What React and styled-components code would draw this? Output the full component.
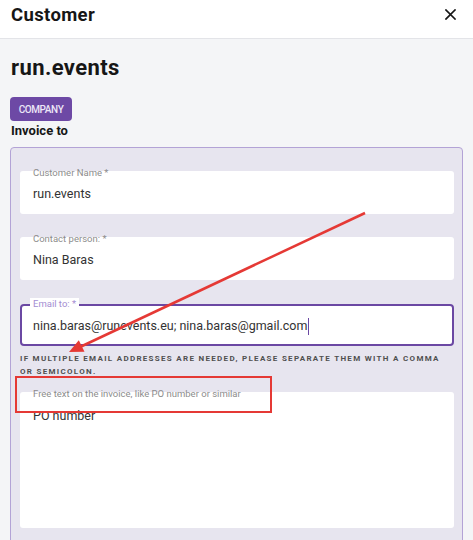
import React from "react";
import styled, { createGlobalStyle } from "styled-components";

const Global = createGlobalStyle`
  html, body { margin: 0; padding: 0; background: #f4f5f7; }
  body { font-family: Roboto, "Noto Sans", "Liberation Sans", sans-serif; color: #161616; overflow: hidden; }
  * { box-sizing: border-box; }
`;

const Page = styled.div`
  position: relative;
  width: 473px;
  min-height: 540px;
  background: #f4f5f7;
`;

const Header = styled.header`
  height: 39px;
  background: #ffffff;
  border-bottom: 1px solid #e3e4e8;
  display: flex;
  align-items: center;
  justify-content: space-between;
  padding: 0 17px 0 11px;
`;

const HeaderTitle = styled.h2`
  margin: -9px 0 0 0;
  font-size: 18.5px;
  font-weight: 700;
  letter-spacing: 0.35px;
`;

const CloseButton = styled.button`
  border: 0;
  background: none;
  padding: 0;
  display: flex;
  margin-top: -10px;
  color: #161616;
`;

const Body = styled.main`
  padding: 0 10px;
`;

const Title = styled.h1`
  margin: 15px 0 0 1px;
  font-size: 22px;
  line-height: 28px;
  font-weight: 700;
  letter-spacing: 0.4px;
`;

const Badge = styled.span`
  display: inline-flex;
  align-items: center;
  justify-content: center;
  margin-top: 15px;
  width: 62px;
  height: 24px;
  border-radius: 4px;
  background: #6d49a5;
  color: #ece6f7;
  font-size: 10px;
  font-weight: 500;
  letter-spacing: -0.4px;
`;

const Section = styled.h3`
  margin: 2px 0 0 1px;
  font-size: 13px;
  line-height: 16px;
  font-weight: 700;
`;

const Panel = styled.section`
  margin-top: 8px;
  background: #e7e5ef;
  border: 1px solid #b3a3d6;
  border-radius: 4px;
  padding: 23px 8px 40px 9px;
  display: flex;
  flex-direction: column;
`;

const Field = styled.div`
  position: relative;
  height: ${(p) => p.$height || 43}px;
  margin-top: ${(p) => p.$gap || 0}px;
  background: #ffffff;
  border: ${(p) => (p.$focused ? "2px solid #6b48a3" : "0")};
  border-radius: ${(p) => (p.$focused ? "4px" : "3px")};
  padding: ${(p) => (p.$focused ? "0 11px" : "0 13px")};
  display: flex;
  align-items: ${(p) => (p.$multiline ? "flex-start" : "center")};
  padding-top: ${(p) => (p.$multiline ? "15px" : "0")};
`;

const Label = styled.span`
  position: absolute;
  left: ${(p) => (p.$focused ? "8px" : "13px")};
  top: ${(p) => (p.$focused ? "-8px" : "-4px")};
  font-size: 9.5px;
  line-height: 12px;
  color: ${(p) => (p.$focused ? "#a48dd2" : "#8c8c8c")};
  background: ${(p) => (p.$focused ? "#ffffff" : "transparent")};
  padding: ${(p) => (p.$focused ? "0 3px" : "0")};
`;

const Value = styled.span`
  font-size: 12.5px;
  line-height: 18px;
  color: #333333;
  margin-top: ${(p) => (p.$multiline ? "0" : "2px")};
  display: inline-flex;
  align-items: center;
`;

const Caret = styled.span`
  display: inline-block;
  width: 1px;
  height: 17px;
  margin-left: 1px;
  background: #6b48a3;
`;

const Hint = styled.p`
  margin: 6px 0 0 0;
  font-size: 8px;
  line-height: 13px;
  font-weight: 700;
  letter-spacing: 1.3px;
  color: #505050;
  text-transform: uppercase;
  max-width: 436px;
`;

const Markup = styled.svg`
  position: absolute;
  left: 0;
  top: 0;
  pointer-events: none;
`;

export default function App() {
  return (
    <Page>
      <Global />
      <Header>
        <HeaderTitle>Customer</HeaderTitle>
        <CloseButton aria-label="Close">
          <svg width="11" height="11" viewBox="0 0 11 11">
            <path d="M1 1 L10 10 M10 1 L1 10" stroke="#161616" strokeWidth="1.7" strokeLinecap="square" />
          </svg>
        </CloseButton>
      </Header>
      <Body>
        <Title>run.events</Title>
        <Badge>COMPANY</Badge>
        <Section>Invoice to</Section>
        <Panel>
          <Field>
            <Label>Customer Name *</Label>
            <Value>run.events</Value>
          </Field>
          <Field $gap={23}>
            <Label>Contact person: *</Label>
            <Value>Nina Baras</Value>
          </Field>
          <Field $gap={24} $height={42} $focused>
            <Label $focused>Email to: *</Label>
            <Value>
              nina.baras@runevents.eu; nina.baras@gmail.com
              <Caret />
            </Value>
          </Field>
          <Hint>If multiple email addresses are needed, please separate them with a comma or semicolon.</Hint>
          <Field $gap={14} $height={136} $multiline>
            <Label>Free text on the invoice, like PO number or similar</Label>
            <Value $multiline>PO number</Value>
          </Field>
        </Panel>
      </Body>
      <Markup width="473" height="540" viewBox="0 0 473 540">
        <line x1="365" y1="213" x2="80" y2="347" stroke="#e53935" strokeWidth="2.5" />
        <polygon points="69,352 84.5,351.8 78.8,340.2" fill="#e53935" />
        <rect x="16" y="377" width="255" height="35" fill="none" stroke="#e53935" strokeWidth="2" />
      </Markup>
    </Page>
  );
}
